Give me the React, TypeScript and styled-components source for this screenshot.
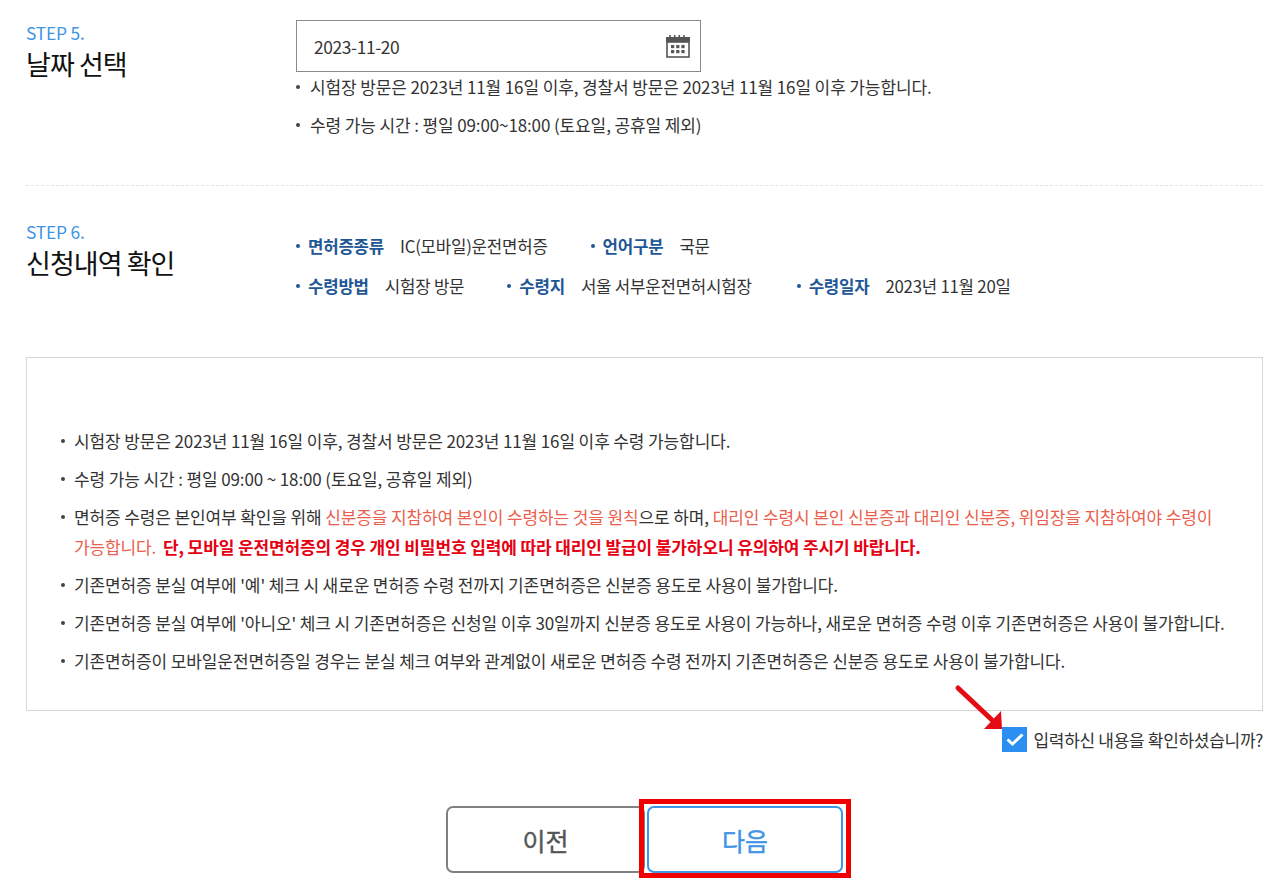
import React from 'react';
import styled, { createGlobalStyle } from 'styled-components';

const GlobalStyle = createGlobalStyle`
  html, body {
    margin: 0;
    padding: 0;
    background: #fff;
    overflow: hidden;
  }
  body {
    font-family: "Noto Sans CJK KR", "Noto Sans", sans-serif;
    color: #333;
  }
`;

const Page = styled.div`
  width: 1273px;
  height: 879px;
  box-sizing: border-box;
  padding: 20px 10px 0 26px;
  overflow: hidden;
`;

const DateSection = styled.section`
  display: flex;
  height: 165px;
  border-bottom: 1px dashed #e4e4e4;
`;

const SummarySection = styled.section`
  display: flex;
  height: 171px;
  padding-top: 33px;
  box-sizing: border-box;
`;

const StepHead = styled.div`
  width: 270px;
  flex: none;
  padding-top: 1px;
`;

const StepNo = styled.div`
  font-size: 17.4px;
  line-height: 24px;
  color: #3f94e6;
  letter-spacing: -0.2px;
`;

const StepTitle = styled.h2`
  margin: 2px 0 0;
  font-size: 27px;
  line-height: 34px;
  font-weight: 400;
  color: #111;
  letter-spacing: -0.95px;
`;

const StepBody = styled.div<{ $pad?: number }>`
  flex: 1;
  padding-top: ${(p) => p.$pad ?? 0}px;
`;

const DateField = styled.div`
  width: 405px;
  height: 52px;
  box-sizing: border-box;
  border: 1px solid #8a8a8a;
  display: flex;
  align-items: center;
  justify-content: space-between;
  padding: 0 9px 0 17px;
  font-size: 17.4px;
  color: #333;
  letter-spacing: -0.4px;
`;

const NoteList = styled.ul`
  list-style: none;
  margin: 0;
  padding: 0;
`;

const Note = styled.li`
  position: relative;
  padding-left: 14px;
  font-size: 17px;
  line-height: 38px;
  color: #333;
  letter-spacing: -0.12px;
  white-space: nowrap;
  &::before {
    content: '';
    position: absolute;
    left: 0;
    top: 17px;
    width: 4px;
    height: 4px;
    border-radius: 50%;
    background: #444;
  }
`;

const DateNotes = styled(NoteList)`
  margin-top: -4px;
`;

const InfoRow = styled.div`
  display: flex;
  height: 40px;
  align-items: center;
`;

const InfoItem = styled.div<{ $gap: number }>`
  display: flex;
  align-items: center;
  margin-right: ${(p) => p.$gap}px;
  font-size: 16.8px;
  letter-spacing: -0.24px;
  white-space: nowrap;
`;

const InfoLabel = styled.span`
  position: relative;
  padding-left: 12px;
  margin-right: 16px;
  font-weight: 700;
  color: #1f5796;
  &::before {
    content: '';
    position: absolute;
    left: 0;
    top: 10px;
    width: 4px;
    height: 4px;
    border-radius: 50%;
    background: #1f5796;
  }
`;

const InfoValue = styled.span`
  color: #333;
`;

const NoticeBox = styled.div`
  width: 1237px;
  height: 354px;
  box-sizing: border-box;
  border: 1px solid #d6d6d6;
  padding: 68px 20px 0 34px;
`;

const NoticeItem = styled(Note)`
  padding-left: 13px;
  margin-bottom: 8px;
  font-size: 17px;
  line-height: 30px;
  white-space: normal;
  word-break: keep-all;
  letter-spacing: -0.12px;
  &::before {
    top: 13px;
  }
`;

const Soft = styled.span`
  color: #e9604d;
`;

const Strong = styled.strong`
  color: #e60012;
  font-weight: 700;
  margin-left: 3px;
`;

const ConfirmRow = styled.div`
  position: relative;
  display: flex;
  justify-content: flex-end;
  align-items: center;
  gap: 6px;
  margin-top: 16px;
  height: 25px;
  font-size: 17px;
  letter-spacing: -0.3px;
  color: #333;
  white-space: nowrap;
`;

const CheckBox = styled.span`
  width: 25px;
  height: 25px;
  background: #2b8ff2;
  display: flex;
  align-items: center;
  justify-content: center;
`;

const PointerArrow = styled.svg`
  position: absolute;
  left: 926px;
  top: -43px;
`;

const Buttons = styled.div`
  display: flex;
  justify-content: center;
  gap: 2px;
  margin-top: 54px;
`;

const Button = styled.button<{ $primary?: boolean }>`
  position: relative;
  width: ${(p) => (p.$primary ? 196 : 199)}px;
  height: 67px;
  box-sizing: border-box;
  background: #fff;
  border: 2px solid ${(p) => (p.$primary ? '#3f94e6' : '#808080')};
  border-radius: 7px;
  font-family: inherit;
  font-size: 25px;
  font-weight: 400;
  -webkit-text-stroke: 0.4px currentColor;
  color: ${(p) => (p.$primary ? '#3f94e6' : '#555')};
`;

const Highlight = styled.span`
  position: absolute;
  left: -10px;
  top: -9px;
  width: 212px;
  height: 79px;
  box-sizing: border-box;
  border: 5px solid #f00000;
  pointer-events: none;
`;

function CalendarIcon() {
  return (
    <svg width="26" height="24" viewBox="0 0 26 24" fill="none">
      <path d="M5 1v3M9.700 1v3M14.300 1v3M19 1v3" stroke="#555" strokeWidth="1.600" />
      <rect x="1" y="3" width="24" height="5" fill="#555" />
      <rect x="2" y="8" width="22" height="15" fill="#fff" stroke="#555" strokeWidth="1.600" />
      {[6, 11.200, 16.400].map((x) =>
        [11, 16].map((y) => <rect key={`${x}-${y}`} x={x} y={y} width="3.200" height="3.200" fill="#555" />)
      )}
    </svg>
  );
}

export default function App() {
  return (
    <>
      <GlobalStyle />
      <Page>
        <DateSection>
          <StepHead>
            <StepNo>STEP 5.</StepNo>
            <StepTitle>날짜 선택</StepTitle>
          </StepHead>
          <StepBody>
            <DateField>
              2023-11-20
              <CalendarIcon />
            </DateField>
            <DateNotes>
              <Note>시험장 방문은 2023년 11월 16일 이후, 경찰서 방문은 2023년 11월 16일 이후 가능합니다.</Note>
              <Note>수령 가능 시간 : 평일 09:00~18:00 (토요일, 공휴일 제외)</Note>
            </DateNotes>
          </StepBody>
        </DateSection>

        <SummarySection>
          <StepHead>
            <StepNo>STEP 6.</StepNo>
            <StepTitle>신청내역 확인</StepTitle>
          </StepHead>
          <StepBody $pad={7}>
            <InfoRow>
              <InfoItem $gap={43}>
                <InfoLabel>면허증종류</InfoLabel>
                <InfoValue>IC(모바일)운전면허증</InfoValue>
              </InfoItem>
              <InfoItem $gap={0}>
                <InfoLabel>언어구분</InfoLabel>
                <InfoValue>국문</InfoValue>
              </InfoItem>
            </InfoRow>
            <InfoRow>
              <InfoItem $gap={43}>
                <InfoLabel>수령방법</InfoLabel>
                <InfoValue>시험장 방문</InfoValue>
              </InfoItem>
              <InfoItem $gap={45}>
                <InfoLabel>수령지</InfoLabel>
                <InfoValue>서울 서부운전면허시험장</InfoValue>
              </InfoItem>
              <InfoItem $gap={0}>
                <InfoLabel>수령일자</InfoLabel>
                <InfoValue>2023년 11월 20일</InfoValue>
              </InfoItem>
            </InfoRow>
          </StepBody>
        </SummarySection>

        <NoticeBox>
          <NoteList>
            <NoticeItem>시험장 방문은 2023년 11월 16일 이후, 경찰서 방문은 2023년 11월 16일 이후 수령 가능합니다.</NoticeItem>
            <NoticeItem>수령 가능 시간 : 평일 09:00 ~ 18:00 (토요일, 공휴일 제외)</NoticeItem>
            <NoticeItem>
              면허증 수령은 본인여부 확인을 위해 <Soft>신분증을 지참하여 본인이 수령하는 것을 원칙</Soft>으로 하며,{' '}
              <Soft>대리인 수령시 본인 신분증과 대리인 신분증, 위임장을 지참하여야 수령이 가능합니다.</Soft>
              <Strong> 단, 모바일 운전면허증의 경우 개인 비밀번호 입력에 따라 대리인 발급이 불가하오니 유의하여 주시기 바랍니다.</Strong>
            </NoticeItem>
            <NoticeItem>기존면허증 분실 여부에 '예' 체크 시 새로운 면허증 수령 전까지 기존면허증은 신분증 용도로 사용이 불가합니다.</NoticeItem>
            <NoticeItem>기존면허증 분실 여부에 '아니오' 체크 시 기존면허증은 신청일 이후 30일까지 신분증 용도로 사용이 가능하나, 새로운 면허증 수령 이후 기존면허증은 사용이 불가합니다.</NoticeItem>
            <NoticeItem>기존면허증이 모바일운전면허증일 경우는 분실 체크 여부와 관계없이 새로운 면허증 수령 전까지 기존면허증은 신분증 용도로 사용이 불가합니다.</NoticeItem>
          </NoteList>
        </NoticeBox>

        <ConfirmRow>
          <PointerArrow width="52" height="52" viewBox="0 0 52 52">
            <path d="M6 4 L40 36" stroke="#e60a14" strokeWidth="5" strokeLinecap="round" />
            <path d="M50 45 L32 45 L49 27 Z" fill="#e60a14" />
          </PointerArrow>
          <CheckBox>
            <svg width="18" height="13" viewBox="0 0 18 13" fill="none">
              <path d="M1.500 6.500 L6.500 11 L16.500 1.500" stroke="#fff" strokeWidth="3" />
            </svg>
          </CheckBox>
          입력하신 내용을 확인하셨습니까?
        </ConfirmRow>

        <Buttons>
          <Button>이전</Button>
          <Button $primary>
            다음
            <Highlight />
          </Button>
        </Buttons>
      </Page>
    </>
  );
}
